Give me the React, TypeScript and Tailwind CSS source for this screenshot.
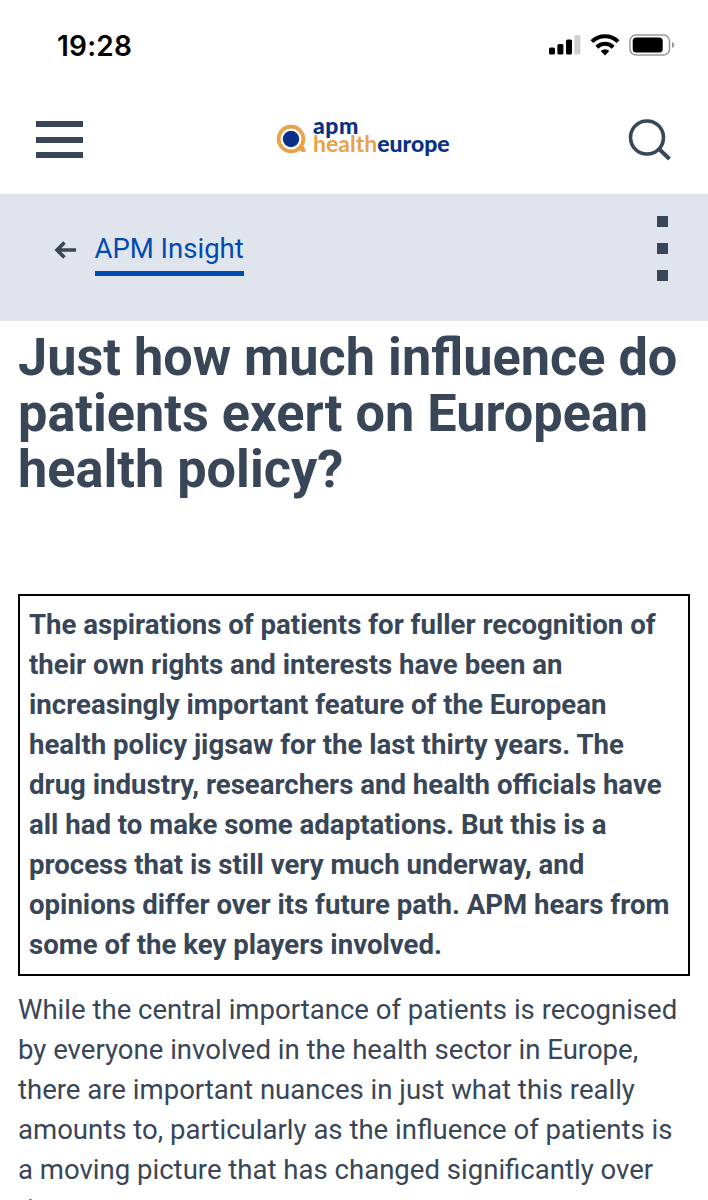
const summary = [
  'The aspirations of patients for fuller recognition of',
  'their own rights and interests have been an',
  'increasingly important feature of the European',
  'health policy jigsaw for the last thirty years. The',
  'drug industry, researchers and health officials have',
  'all had to make some adaptations. But this is a',
  'process that is still very much underway, and',
  'opinions differ over its future path. APM hears from',
  'some of the key players involved.',
];

const body = [
  'While the central importance of patients is recognised',
  'by everyone involved in the health sector in Europe,',
  'there are important nuances in just what this really',
  'amounts to, particularly as the influence of patients is',
  'a moving picture that has changed significantly over',
  'time.',
];

function StatusBar() {
  return (
    <div className="flex h-[84px] items-start justify-between pl-[57px] pr-[32px] pt-[28px] text-black">
      <span className="font-['Inter'] text-[28px] font-semibold leading-[36px] tracking-[0.2px]">19:28</span>
      <div className="flex items-start pt-[6px]">
        <svg width="32" height="22" viewBox="0 0 32 22">
          <rect x="0" y="13.5" width="6" height="7" rx="1.6" />
          <rect x="8.400" y="10" width="6" height="10.500" rx="1.6" />
          <rect x="17" y="5.500" width="6" height="15" rx="1.600" />
          <rect x="25.400" y="1" width="6" height="19.500" rx="1.600" fill="#cfcfcf" />
        </svg>
        <svg className="ml-[9px]" width="31" height="22" viewBox="0 0 31 22" fill="none" stroke="#000" strokeWidth="4">
          <path d="M1.900 7.600a18.700 18.700 0 0 1 26.200 0" />
          <path d="M6.800 13.200a11.700 11.700 0 0 1 16.400 0" />
          <path d="M15 21.500l-4.300-4.400a6.200 6.200 0 0 1 8.600 0z" fill="#000" stroke="none" />
        </svg>
        <svg className="ml-[8px]" width="47" height="22" viewBox="0 0 47 22">
          <rect x="1" y="1" width="39.500" height="20" rx="6" fill="none" stroke="#999" strokeWidth="1.500" />
          <rect x="3.700" y="3.500" width="30" height="15" rx="3.500" />
          <path d="M43 8v6c3-1 3-5 0-6z" fill="#999" />
        </svg>
      </div>
    </div>
  );
}

function Header() {
  return (
    <header className="flex h-[110px] items-center justify-between pl-9 pr-9">
      <button aria-label="Menu" className="flex w-[47px] flex-col gap-[9.500px] pt-px">
        <span className="h-[6px] bg-[#384657]" />
        <span className="h-[6px] bg-[#384657]" />
        <span className="h-[6px] bg-[#384657]" />
      </button>
      <div className="ml-[17px] flex h-[50px] w-[176px] items-start">
        <svg className="mt-[10px] shrink-0" width="32" height="32" viewBox="0 0 32 32">
          <circle cx="15" cy="15" r="12.400" fill="none" stroke="#e8a24a" strokeWidth="3.800" />
          <path d="M21 25l5-5 3.500 5.500v2.500h-3.500z" fill="#e8a24a" />
          <circle cx="15" cy="15" r="8.200" fill="#0a2f87" />
        </svg>
        <div className="ml-[5px] mt-[2px] whitespace-nowrap font-['Lato'] text-[23px] font-bold leading-[18px] text-[#0a2f87]">
          <div className="font-black tracking-[0.5px]">apm</div>
          <div><span className="text-[#e8a24a]">health</span><span className="font-black">europe</span></div>
        </div>
      </div>
      <svg width="44" height="44" viewBox="0 0 44 44" fill="none" stroke="#384657" strokeWidth="3.600">
        <circle cx="19" cy="20.500" r="16.500" />
        <path d="M30.500 31.500l11 10.500" strokeWidth="4" />
      </svg>
    </header>
  );
}

function SectionBar() {
  return (
    <div className="flex h-[127px] items-start justify-between bg-[#e0e5ed] pl-[54px] pr-[40px]">
      <div className="flex">
        <svg className="mt-[47px]" width="23" height="18" viewBox="0 0 23 18" fill="none" stroke="#384657" strokeWidth="3.600">
          <path d="M22 9H3M10.500 1.500L3 9l7.500 7.500" />
        </svg>
        <a className="ml-[17.500px] mt-[37px] h-[45px] w-[149px] whitespace-nowrap border-b-[5px] border-[#004bb1] text-[27.500px] leading-[36px] text-[#004bb1]">APM Insight</a>
      </div>
      <button aria-label="More" className="mt-[22px] flex flex-col gap-[16px]">
        <span className="size-[11px] bg-[#384657]" />
        <span className="size-[11px] bg-[#384657]" />
        <span className="size-[11px] bg-[#384657]" />
      </button>
    </div>
  );
}

export default function App() {
  return (
    <div className="h-[1200px] w-[708px] overflow-hidden bg-white font-['Roboto',sans-serif] text-[#384657]">
      <StatusBar />
      <Header />
      <SectionBar />
      <main className="px-[18px] pt-[9px]">
        <h1 className="whitespace-nowrap text-[52.250px] font-bold leading-[56px]">
          <span className="block">Just how much influence do</span>
          <span className="block">patients exert on European</span>
          <span className="block">health policy?</span>
        </h1>
        <div className="mt-[96px] h-[382px] w-[672px] whitespace-nowrap border-2 border-black pl-[9px] pt-[9px] text-[27.600px] font-bold leading-[40px]">
          {summary.map((line) => <div key={line}>{line}</div>)}
        </div>
        <div className="mt-[14px] whitespace-nowrap text-[27.550px] leading-[40px]">
          {body.map((line) => <div key={line}>{line}</div>)}
        </div>
      </main>
    </div>
  );
}
